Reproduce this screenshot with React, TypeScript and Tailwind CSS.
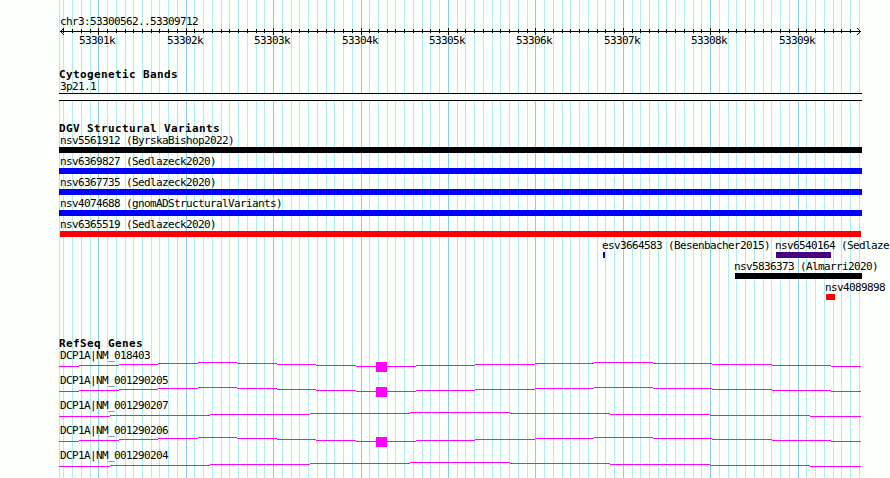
import clsx from "clsx";

const LEFT = 59;
const RIGHT = 861;

// one grid line per 100 bp, a darker one per 1000 bp
const ticks = Array.from({ length: 92 }, (_, i) => i - 4).map((k) => ({
  x: Math.floor(98.8 + k * 8.741),
  major: k % 10 === 0,
  label: `${53301 + k / 10}k`,
}));

type Variant = { name: string; x: number; start: number; end: number; color: string };

const variants: Variant[][] = [
  [{ name: "nsv5561912 (ByrskaBishop2022)", x: 60, start: 59, end: 862, color: "bg-[#020004]" }],
  [{ name: "nsv6369827 (Sedlazeck2020)", x: 60, start: 59, end: 862, color: "bg-[#0000ff]" }],
  [{ name: "nsv6367735 (Sedlazeck2020)", x: 60, start: 59, end: 862, color: "bg-[#0000ff]" }],
  [{ name: "nsv4074688 (gnomADStructuralVariants)", x: 60, start: 59, end: 862, color: "bg-[#0000ff]" }],
  [{ name: "nsv6365519 (Sedlazeck2020)", x: 60, start: 60, end: 861, color: "bg-[#ff0000]" }],
  [
    { name: "esv3664583 (Besenbacher2015)", x: 602, start: 603, end: 605, color: "bg-[#0000ff]" },
    { name: "nsv6540164 (Sedlaze", x: 775, start: 776, end: 831, color: "bg-[#4b0082]" },
  ],
  [{ name: "nsv5836373 (Almarri2020)", x: 734, start: 735, end: 862, color: "bg-[#020004]" }],
  [{ name: "nsv4089898", x: 825, start: 826, end: 835, color: "bg-[#ff0000]" }],
];

// [x where the step begins, rise above the baseline]
const shortIntrons = [
  [59, 0], [79, 1], [119, 2], [158, 3], [198, 4], [237, 3], [277, 2], [316, 1], [356, 0],
  [416, 1], [475, 2], [535, 3], [594, 4], [653, 3], [712, 2], [772, 1], [831, 0],
];
const longIntron = [
  [59, 0], [110, 1], [210, 2], [310, 3], [410, 4], [510, 3], [610, 2], [710, 1], [810, 0],
];

const genes = [
  { name: "DCP1A|NM_018403", exon: true },
  { name: "DCP1A|NM_001290205", exon: true },
  { name: "DCP1A|NM_001290207", exon: false },
  { name: "DCP1A|NM_001290206", exon: true },
  { name: "DCP1A|NM_001290204", exon: false },
];

function Grid() {
  return (
    <svg className="absolute inset-0 -z-10" width="890" height="478" shapeRendering="crispEdges">
      <rect x={LEFT} y="0" width="1" height="478" fill="#afeeee" />
      {ticks.map((t) => (
        <rect key={t.x} x={t.x} y="0" width="1" height="478" fill={t.major ? "#87ceeb" : "#afeeee"} />
      ))}
    </svg>
  );
}

function Heading({ children }: { children: string }) {
  return <h2 className="h-3 pl-[59px] font-bold leading-3 tracking-[0.378px]">{children}</h2>;
}

function Ruler() {
  return (
    <header className="h-[69px] pt-4">
      <p className="h-[11px] pl-[60px]">chr3:53300562..53309712</p>
      <svg className="block" width="890" height="8" shapeRendering="crispEdges" fill="#000">
        <rect x="60" y="4" width="801" height="1" />
        {ticks.slice(0, -1).map((t) => (
          <rect key={t.x} x={t.x} y={t.major ? 1 : 2} width="1" height={t.major ? 7 : 4} />
        ))}
        {[0, 1, 2, 3].map((i) => (
          <g key={i}>
            <rect x={60 + i} y={4 - i} width="1" height="1" />
            <rect x={60 + i} y={4 + i} width="1" height="1" />
            <rect x={860 - i} y={4 - i} width="1" height="1" />
            <rect x={860 - i} y={4 + i} width="1" height="1" />
          </g>
        ))}
      </svg>
      <div className="relative h-3">
        {ticks
          .filter((t) => t.major)
          .map((t) => (
            <span key={t.x} className="absolute" style={{ left: t.x - 19 }}>
              {t.label}
            </span>
          ))}
      </div>
    </header>
  );
}

function VariantRow({ items }: { items: Variant[] }) {
  return (
    <div className="relative h-[21px]">
      {items.map((v) => (
        <div key={v.name}>
          <span className="absolute top-0" style={{ left: v.x }}>
            {v.name}
          </span>
          <div
            className={clsx("absolute top-3 h-1.5", v.color)}
            style={{ left: v.start, width: v.end - v.start }}
          />
        </div>
      ))}
    </div>
  );
}

function GeneRow({ name, exon }: { name: string; exon: boolean }) {
  const steps = exon ? shortIntrons : longIntron;
  return (
    <div className="h-[25px]">
      <p className="h-3 pl-[60px]">{name}</p>
      <svg className="block" width="890" height="13" shapeRendering="crispEdges" fill="#ff00ff">
        {steps.map(([x, rise], i) => (
          <rect
            key={x}
            x={x}
            y={4 - rise}
            width={(steps[i + 1]?.[0] ?? RIGHT) - x}
            height="1"
          />
        ))}
        {exon && <rect x="376" y="0" width="11" height="10" />}
      </svg>
    </div>
  );
}

export default function App() {
  return (
    <main className="relative isolate h-[478px] w-[890px] overflow-hidden whitespace-nowrap bg-[#fdfffc] font-['DejaVu_Sans_Mono',monospace] text-[11px] leading-3 tracking-[-0.622px] text-black">
      <Grid />
      <Ruler />

      <section className="h-[54px]">
        <Heading>Cytogenetic Bands</Heading>
        <p className="h-3 pl-[60px]">3p21.1</p>
        <div className="ml-[59px] h-2 w-[803px] border-y border-black bg-[#fdfffc]" />
      </section>

      <section className="h-[215px]">
        <Heading>DGV Structural Variants</Heading>
        {variants.map((row) => (
          <VariantRow key={row[0].name} items={row} />
        ))}
      </section>

      <section>
        <Heading>RefSeq Genes</Heading>
        {genes.map((gene) => (
          <GeneRow key={gene.name} {...gene} />
        ))}
      </section>
    </main>
  );
}
